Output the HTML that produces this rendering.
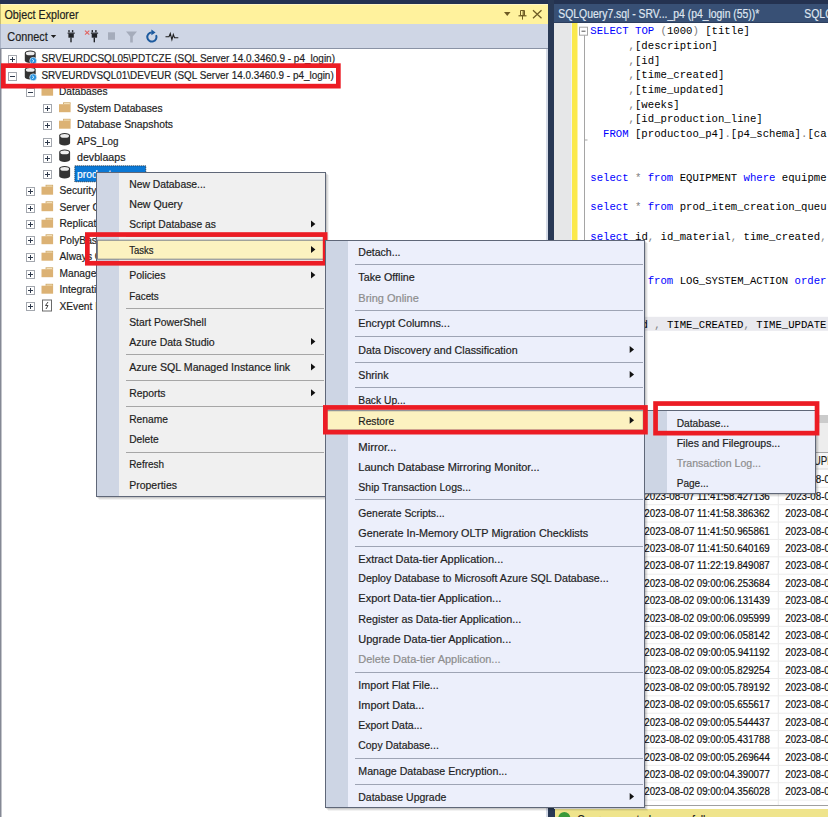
<!DOCTYPE html>
<html><head><meta charset="utf-8"><style>
html,body{margin:0;padding:0;width:828px;height:817px;overflow:hidden;background:#293955}
svg{display:block}
text{white-space:pre}
</style></head><body>
<svg width="828" height="817" viewBox="0 0 828 817">
<rect x="0" y="0" width="828" height="817" fill="#293955" />
<rect x="0" y="0" width="828" height="4" fill="#243250" />
<rect x="0" y="4" width="548" height="20" fill="#fff29d" />
<rect x="0" y="4" width="548" height="1" fill="#fff6c4" />
<rect x="0" y="4" width="1" height="20" fill="#c8bd72" />
<text x="4.5" y="19.1" font-family="Liberation Sans" font-size="12" fill="#1e1e1e" stroke="#1e1e1e" stroke-width="0.2" textLength="74.0" lengthAdjust="spacingAndGlyphs" >Object Explorer</text>
<path d="M504 12 L510.5 12 L507.25 16 Z" fill="#6e5b24" stroke="none" stroke-width="1" />
<path d="M520.5 10.5 h4 v5 h-4 Z" fill="none" stroke="#6e5b24" stroke-width="1" />
<path d="M518.5 15.8 h8" fill="none" stroke="#6e5b24" stroke-width="1.2" />
<path d="M522.5 16 v3.6" fill="none" stroke="#6e5b24" stroke-width="1" />
<rect x="522.6" y="10.5" width="1.2" height="5" fill="#6e5b24" />
<path d="M533 10.3 L541.5 18.3 M541.5 10.3 L533 18.3" fill="none" stroke="#6e5b24" stroke-width="1.25" />
<rect x="0" y="24" width="548" height="24" fill="#cfd6e5" />
<rect x="0" y="24" width="1" height="24" fill="#aab3c6" />
<rect x="0" y="48" width="548" height="1" fill="#8a93a5" />
<text x="7.3" y="40.8" font-family="Liberation Sans" font-size="12" fill="#1e1e1e" stroke="#1e1e1e" stroke-width="0.2" textLength="40.5" lengthAdjust="spacingAndGlyphs" >Connect</text>
<path d="M50.8 35 L56.2 35 L53.5 38 Z" fill="#1e1e1e" stroke="none" stroke-width="1" />
<rect x="68.3" y="30.1" width="1.4" height="2.2" fill="#222428" />
<rect x="71.9" y="30.1" width="1.4" height="2.2" fill="#222428" />
<rect x="67.6" y="32.6" width="7.2" height="1.1" fill="#222428" />
<rect x="68.4" y="33.5" width="5.4" height="4.2" fill="#222428" />
<rect x="70.3" y="37.5" width="1.4" height="4.8" fill="#222428" />
<rect x="91.6" y="30.1" width="1.4" height="2.2" fill="#222428" />
<rect x="95.2" y="30.1" width="1.4" height="2.2" fill="#222428" />
<rect x="90.89999999999999" y="32.6" width="7.2" height="1.1" fill="#222428" />
<rect x="91.7" y="33.5" width="5.4" height="4.2" fill="#222428" />
<rect x="93.6" y="37.5" width="1.4" height="4.8" fill="#222428" />
<path d="M85 30.6 L89.3 34.6 M89.3 30.6 L85 34.6" fill="none" stroke="#e2625f" stroke-width="1.1" />
<rect x="108" y="32.3" width="7" height="7.5" fill="#a5acbb" />
<path d="M126 31.5 h11 l-4.2 5 v6 h-2.6 v-6 Z" fill="#a5acbb" stroke="none" stroke-width="1" />
<path d="M151.74 32.40 A4.6 4.6 0 1 0 156.07 35.06" fill="none" stroke="#1d5a9e" stroke-width="2.0" />
<path d="M151.4 29.6 L155.6 32.4 L151.4 35.2 Z" fill="#1d5a9e" stroke="none" stroke-width="1" />
<path d="M165.5 36.8 h3.5 l1.3 -3.2 l1.6 6 l1.4 -5 l1.2 3.2 h3.8" fill="none" stroke="#1e1e1e" stroke-width="1.1" />
<rect x="1" y="49" width="547" height="768" fill="#ffffff" />
<rect x="546" y="49" width="2" height="768" fill="#d5dbe7" />
<rect x="0" y="49" width="1.5" height="768" fill="#858995" />
<rect x="8.5" y="55.5" width="8" height="8" fill="#ffffff" stroke="#a3a7ae" stroke-width="1"/>
<line x1="10" y1="59.5" x2="15" y2="59.5" stroke="#2f3a4c" stroke-width="1" />
<line x1="12.5" y1="57" x2="12.5" y2="62" stroke="#2f3a4c" stroke-width="1" />
<path d="M24.8 53.0 a5.45 2.5 0 0 1 10.9 0 v7.6 a5.45 2.5 0 0 1 -10.9 0 Z" fill="#333333" stroke="none" stroke-width="1" />
<ellipse cx="30.25" cy="53.4" rx="4.4" ry="1.9" fill="#eeeeee"/>
<circle cx="33.2" cy="60.8" r="3.5" fill="#2b92dc" stroke="#ffffff" stroke-width="0.6"/>
<path d="M32.2 59.3 l1.8 1.5 l-1.8 1.5" fill="none" stroke="#d8f0ff" stroke-width="1" />
<text x="41.5" y="62.0" font-family="Liberation Sans" font-size="11.6" fill="#1e1e1e" stroke="#1e1e1e" stroke-width="0.2" textLength="293.5" lengthAdjust="spacingAndGlyphs" >SRVEURDCSQL05\PDTCZE (SQL Server 14.0.3460.9 - p4_login)</text>
<rect x="8.5" y="72.5" width="8" height="8" fill="#ffffff" stroke="#a3a7ae" stroke-width="1"/>
<line x1="10" y1="76.5" x2="15" y2="76.5" stroke="#2f3a4c" stroke-width="1" />
<path d="M24.8 69.5 a5.45 2.5 0 0 1 10.9 0 v7.6 a5.45 2.5 0 0 1 -10.9 0 Z" fill="#333333" stroke="none" stroke-width="1" />
<ellipse cx="30.25" cy="69.9" rx="4.4" ry="1.9" fill="#eeeeee"/>
<circle cx="33.2" cy="77.3" r="3.5" fill="#2b92dc" stroke="#ffffff" stroke-width="0.6"/>
<path d="M32.2 75.8 l1.8 1.5 l-1.8 1.5" fill="none" stroke="#d8f0ff" stroke-width="1" />
<text x="41.5" y="78.5" font-family="Liberation Sans" font-size="11.6" fill="#1e1e1e" stroke="#1e1e1e" stroke-width="0.2" textLength="292.2" lengthAdjust="spacingAndGlyphs" >SRVEURDVSQL01\DEVEUR (SQL Server 14.0.3460.9 - p4_login)</text>
<rect x="26.5" y="88.5" width="8" height="8" fill="#ffffff" stroke="#a3a7ae" stroke-width="1"/>
<line x1="28" y1="92.5" x2="33" y2="92.5" stroke="#2f3a4c" stroke-width="1" />
<path d="M45.6 85.8 h7.5 v2 h-7.5 Z" fill="#cfa96a" stroke="none" stroke-width="1" />
<rect x="46.5" y="86.60000000000001" width="5.8" height="1.1" fill="#f6e6c0" />
<rect x="41.5" y="87.7" width="11.6" height="8" fill="#dcb274" />
<text x="59" y="95.0" font-family="Liberation Sans" font-size="11.6" fill="#1e1e1e" stroke="#1e1e1e" stroke-width="0.2" textLength="48.5" lengthAdjust="spacingAndGlyphs" >Databases</text>
<rect x="43.5" y="104.5" width="8" height="8" fill="#ffffff" stroke="#a3a7ae" stroke-width="1"/>
<line x1="45" y1="108.5" x2="50" y2="108.5" stroke="#2f3a4c" stroke-width="1" />
<line x1="47.5" y1="106" x2="47.5" y2="111" stroke="#2f3a4c" stroke-width="1" />
<path d="M63.1 102.3 h7.5 v2 h-7.5 Z" fill="#cfa96a" stroke="none" stroke-width="1" />
<rect x="64" y="103.10000000000001" width="5.8" height="1.1" fill="#f6e6c0" />
<rect x="59" y="104.2" width="11.6" height="8" fill="#dcb274" />
<text x="77" y="111.5" font-family="Liberation Sans" font-size="11.6" fill="#1e1e1e" stroke="#1e1e1e" stroke-width="0.2" textLength="85.5" lengthAdjust="spacingAndGlyphs" >System Databases</text>
<rect x="43.5" y="121.5" width="8" height="8" fill="#ffffff" stroke="#a3a7ae" stroke-width="1"/>
<line x1="45" y1="125.5" x2="50" y2="125.5" stroke="#2f3a4c" stroke-width="1" />
<line x1="47.5" y1="123" x2="47.5" y2="128" stroke="#2f3a4c" stroke-width="1" />
<path d="M63.1 118.79999999999998 h7.5 v2 h-7.5 Z" fill="#cfa96a" stroke="none" stroke-width="1" />
<rect x="64" y="119.6" width="5.8" height="1.1" fill="#f6e6c0" />
<rect x="59" y="120.69999999999999" width="11.6" height="8" fill="#dcb274" />
<text x="77" y="128.0" font-family="Liberation Sans" font-size="11.6" fill="#1e1e1e" stroke="#1e1e1e" stroke-width="0.2" textLength="96.0" lengthAdjust="spacingAndGlyphs" >Database Snapshots</text>
<rect x="43.5" y="138.5" width="8" height="8" fill="#ffffff" stroke="#a3a7ae" stroke-width="1"/>
<line x1="45" y1="142.5" x2="50" y2="142.5" stroke="#2f3a4c" stroke-width="1" />
<line x1="47.5" y1="140" x2="47.5" y2="145" stroke="#2f3a4c" stroke-width="1" />
<path d="M59.2 135.5 a5.45 2.5 0 0 1 10.9 0 v7.6 a5.45 2.5 0 0 1 -10.9 0 Z" fill="#333333" stroke="none" stroke-width="1" />
<ellipse cx="64.65" cy="135.9" rx="4.4" ry="1.9" fill="#eeeeee"/>
<text x="77" y="144.5" font-family="Liberation Sans" font-size="11.6" fill="#1e1e1e" stroke="#1e1e1e" stroke-width="0.2" textLength="41.5" lengthAdjust="spacingAndGlyphs" >APS_Log</text>
<rect x="43.5" y="154.5" width="8" height="8" fill="#ffffff" stroke="#a3a7ae" stroke-width="1"/>
<line x1="45" y1="158.5" x2="50" y2="158.5" stroke="#2f3a4c" stroke-width="1" />
<line x1="47.5" y1="156" x2="47.5" y2="161" stroke="#2f3a4c" stroke-width="1" />
<path d="M59.2 152.0 a5.45 2.5 0 0 1 10.9 0 v7.6 a5.45 2.5 0 0 1 -10.9 0 Z" fill="#333333" stroke="none" stroke-width="1" />
<ellipse cx="64.65" cy="152.4" rx="4.4" ry="1.9" fill="#eeeeee"/>
<text x="77" y="161.0" font-family="Liberation Sans" font-size="11.6" fill="#1e1e1e" stroke="#1e1e1e" stroke-width="0.2" textLength="48.5" lengthAdjust="spacingAndGlyphs" >devblaaps</text>
<rect x="43.5" y="170.5" width="8" height="8" fill="#ffffff" stroke="#a3a7ae" stroke-width="1"/>
<line x1="45" y1="174.5" x2="50" y2="174.5" stroke="#2f3a4c" stroke-width="1" />
<line x1="47.5" y1="172" x2="47.5" y2="177" stroke="#2f3a4c" stroke-width="1" />
<path d="M59.2 168.5 a5.45 2.5 0 0 1 10.9 0 v7.6 a5.45 2.5 0 0 1 -10.9 0 Z" fill="#333333" stroke="none" stroke-width="1" />
<ellipse cx="64.65" cy="168.9" rx="4.4" ry="1.9" fill="#eeeeee"/>
<rect x="74.8" y="165.8" width="71" height="16" fill="#0a78d5" />
<rect x="74.8" y="165.8" width="71" height="16" fill="none" stroke="#1a1a1a" stroke-width="0.8" stroke-dasharray="1 1"/>
<text x="77" y="177.5" font-family="Liberation Sans" font-size="11.6" fill="#ffffff" stroke="#ffffff" stroke-width="0.2" textLength="46.0" lengthAdjust="spacingAndGlyphs" >productoo</text>
<rect x="26.5" y="187.5" width="8" height="8" fill="#ffffff" stroke="#a3a7ae" stroke-width="1"/>
<line x1="28" y1="191.5" x2="33" y2="191.5" stroke="#2f3a4c" stroke-width="1" />
<line x1="30.5" y1="189" x2="30.5" y2="194" stroke="#2f3a4c" stroke-width="1" />
<path d="M45.6 184.79999999999998 h7.5 v2 h-7.5 Z" fill="#cfa96a" stroke="none" stroke-width="1" />
<rect x="46.5" y="185.6" width="5.8" height="1.1" fill="#f6e6c0" />
<rect x="41.5" y="186.7" width="11.6" height="8" fill="#dcb274" />
<text x="59.5" y="194.0" font-family="Liberation Sans" font-size="11.6" fill="#1e1e1e" stroke="#1e1e1e" stroke-width="0.2" textLength="36.8" lengthAdjust="spacingAndGlyphs" >Security</text>
<rect x="26.5" y="204.5" width="8" height="8" fill="#ffffff" stroke="#a3a7ae" stroke-width="1"/>
<line x1="28" y1="208.5" x2="33" y2="208.5" stroke="#2f3a4c" stroke-width="1" />
<line x1="30.5" y1="206" x2="30.5" y2="211" stroke="#2f3a4c" stroke-width="1" />
<path d="M45.6 201.29999999999998 h7.5 v2 h-7.5 Z" fill="#cfa96a" stroke="none" stroke-width="1" />
<rect x="46.5" y="202.1" width="5.8" height="1.1" fill="#f6e6c0" />
<rect x="41.5" y="203.2" width="11.6" height="8" fill="#dcb274" />
<text x="59.5" y="210.5" font-family="Liberation Sans" font-size="11.6" fill="#1e1e1e" stroke="#1e1e1e" stroke-width="0.2" textLength="67.5" lengthAdjust="spacingAndGlyphs" >Server Objects</text>
<rect x="26.5" y="220.5" width="8" height="8" fill="#ffffff" stroke="#a3a7ae" stroke-width="1"/>
<line x1="28" y1="224.5" x2="33" y2="224.5" stroke="#2f3a4c" stroke-width="1" />
<line x1="30.5" y1="222" x2="30.5" y2="227" stroke="#2f3a4c" stroke-width="1" />
<path d="M45.6 217.79999999999998 h7.5 v2 h-7.5 Z" fill="#cfa96a" stroke="none" stroke-width="1" />
<rect x="46.5" y="218.6" width="5.8" height="1.1" fill="#f6e6c0" />
<rect x="41.5" y="219.7" width="11.6" height="8" fill="#dcb274" />
<text x="59.5" y="227.0" font-family="Liberation Sans" font-size="11.6" fill="#1e1e1e" stroke="#1e1e1e" stroke-width="0.2" textLength="50.5" lengthAdjust="spacingAndGlyphs" >Replication</text>
<rect x="26.5" y="236.5" width="8" height="8" fill="#ffffff" stroke="#a3a7ae" stroke-width="1"/>
<line x1="28" y1="240.5" x2="33" y2="240.5" stroke="#2f3a4c" stroke-width="1" />
<line x1="30.5" y1="238" x2="30.5" y2="243" stroke="#2f3a4c" stroke-width="1" />
<path d="M45.6 234.29999999999998 h7.5 v2 h-7.5 Z" fill="#cfa96a" stroke="none" stroke-width="1" />
<rect x="46.5" y="235.1" width="5.8" height="1.1" fill="#f6e6c0" />
<rect x="41.5" y="236.2" width="11.6" height="8" fill="#dcb274" />
<text x="59.5" y="243.5" font-family="Liberation Sans" font-size="11.6" fill="#1e1e1e" stroke="#1e1e1e" stroke-width="0.2" textLength="43.1" lengthAdjust="spacingAndGlyphs" >PolyBase</text>
<rect x="26.5" y="253.5" width="8" height="8" fill="#ffffff" stroke="#a3a7ae" stroke-width="1"/>
<line x1="28" y1="257.5" x2="33" y2="257.5" stroke="#2f3a4c" stroke-width="1" />
<line x1="30.5" y1="255" x2="30.5" y2="260" stroke="#2f3a4c" stroke-width="1" />
<path d="M45.6 250.79999999999998 h7.5 v2 h-7.5 Z" fill="#cfa96a" stroke="none" stroke-width="1" />
<rect x="46.5" y="251.6" width="5.8" height="1.1" fill="#f6e6c0" />
<rect x="41.5" y="252.7" width="11.6" height="8" fill="#dcb274" />
<text x="59.5" y="260.0" font-family="Liberation Sans" font-size="11.6" fill="#1e1e1e" stroke="#1e1e1e" stroke-width="0.2" textLength="123.6" lengthAdjust="spacingAndGlyphs" >Always On High Availability</text>
<rect x="26.5" y="270.5" width="8" height="8" fill="#ffffff" stroke="#a3a7ae" stroke-width="1"/>
<line x1="28" y1="274.5" x2="33" y2="274.5" stroke="#2f3a4c" stroke-width="1" />
<line x1="30.5" y1="272" x2="30.5" y2="277" stroke="#2f3a4c" stroke-width="1" />
<path d="M45.6 267.3 h7.5 v2 h-7.5 Z" fill="#cfa96a" stroke="none" stroke-width="1" />
<rect x="46.5" y="268.09999999999997" width="5.8" height="1.1" fill="#f6e6c0" />
<rect x="41.5" y="269.2" width="11.6" height="8" fill="#dcb274" />
<text x="59.5" y="276.5" font-family="Liberation Sans" font-size="11.6" fill="#1e1e1e" stroke="#1e1e1e" stroke-width="0.2" textLength="59.5" lengthAdjust="spacingAndGlyphs" >Management</text>
<rect x="26.5" y="286.5" width="8" height="8" fill="#ffffff" stroke="#a3a7ae" stroke-width="1"/>
<line x1="28" y1="290.5" x2="33" y2="290.5" stroke="#2f3a4c" stroke-width="1" />
<line x1="30.5" y1="288" x2="30.5" y2="293" stroke="#2f3a4c" stroke-width="1" />
<path d="M45.6 283.8 h7.5 v2 h-7.5 Z" fill="#cfa96a" stroke="none" stroke-width="1" />
<rect x="46.5" y="284.59999999999997" width="5.8" height="1.1" fill="#f6e6c0" />
<rect x="41.5" y="285.7" width="11.6" height="8" fill="#dcb274" />
<text x="59.5" y="293.0" font-family="Liberation Sans" font-size="11.6" fill="#1e1e1e" stroke="#1e1e1e" stroke-width="0.2" textLength="133.2" lengthAdjust="spacingAndGlyphs" >Integration Services Catalogs</text>
<rect x="26.5" y="302.5" width="8" height="8" fill="#ffffff" stroke="#a3a7ae" stroke-width="1"/>
<line x1="28" y1="306.5" x2="33" y2="306.5" stroke="#2f3a4c" stroke-width="1" />
<line x1="30.5" y1="304" x2="30.5" y2="309" stroke="#2f3a4c" stroke-width="1" />
<rect x="42.5" y="300.0" width="9" height="11" fill="#ffffff" stroke="#6a6a6a" stroke-width="1"/>
<path d="M48 302.0 l-2.5 3.5 h2.5 l-2 3.5" fill="none" stroke="#333" stroke-width="0.9" />
<text x="59.5" y="309.5" font-family="Liberation Sans" font-size="11.6" fill="#1e1e1e" stroke="#1e1e1e" stroke-width="0.2" textLength="68.0" lengthAdjust="spacingAndGlyphs" >XEvent Profiler</text>
<rect x="554" y="4" width="274" height="18.5" fill="#385075" />
<text x="558.3" y="17.5" font-family="Liberation Sans" font-size="12" fill="#dfe5f0" stroke="#dfe5f0" stroke-width="0.2" textLength="201.0" lengthAdjust="spacingAndGlyphs" >SQLQuery7.sql - SRV..._p4 (p4_login (55))*</text>
<text x="804.3" y="17.5" font-family="Liberation Sans" font-size="12" fill="#dfe5f0" stroke="#dfe5f0" stroke-width="0.2" textLength="49.3" lengthAdjust="spacingAndGlyphs" >SQLQuery</text>
<rect x="554" y="22.3" width="274" height="0.8" fill="#2c3d5c" />
<rect x="554" y="23" width="274" height="392" fill="#ffffff" />
<rect x="554" y="23" width="17.5" height="392" fill="#e6e7e8" />
<rect x="572" y="23" width="5.5" height="392" fill="#fbe94c" />
<rect x="579.5" y="27.2" width="8" height="8" fill="#ffffff" stroke="#a5a5a5" stroke-width="1"/>
<line x1="581.5" y1="31.2" x2="585.5" y2="31.2" stroke="#555" stroke-width="1" />
<line x1="584.5" y1="35.2" x2="584.5" y2="415" stroke="#a5a5a5" stroke-width="1" />
<line x1="584.5" y1="140" x2="587.5" y2="140" stroke="#a5a5a5" stroke-width="1" />
<rect x="586" y="316.8" width="242" height="14" fill="#e9e9ee" />
<text x="590.3" y="34.4" font-family="Liberation Mono" font-size="10.7" fill="#0000ff"  textLength="38.3" lengthAdjust="spacingAndGlyphs" xml:space="preserve">SELECT</text>
<text x="634.995" y="34.4" font-family="Liberation Mono" font-size="10.7" fill="#0000ff"  textLength="19.2" lengthAdjust="spacingAndGlyphs" xml:space="preserve">TOP</text>
<text x="660.535" y="34.4" font-family="Liberation Mono" font-size="10.7" fill="#808080"  textLength="6.4" lengthAdjust="spacingAndGlyphs" xml:space="preserve">(</text>
<text x="666.92" y="34.4" font-family="Liberation Mono" font-size="10.7" fill="#000000"  textLength="25.5" lengthAdjust="spacingAndGlyphs" xml:space="preserve">1000</text>
<text x="692.4599999999999" y="34.4" font-family="Liberation Mono" font-size="10.7" fill="#808080"  textLength="6.4" lengthAdjust="spacingAndGlyphs" xml:space="preserve">)</text>
<text x="705.2299999999999" y="34.4" font-family="Liberation Mono" font-size="10.7" fill="#000000"  textLength="44.7" lengthAdjust="spacingAndGlyphs" xml:space="preserve">[title]</text>
<text x="628.6099999999999" y="49.07" font-family="Liberation Mono" font-size="10.7" fill="#808080"  textLength="6.4" lengthAdjust="spacingAndGlyphs" xml:space="preserve">,</text>
<text x="634.995" y="49.07" font-family="Liberation Mono" font-size="10.7" fill="#000000"  textLength="83.0" lengthAdjust="spacingAndGlyphs" xml:space="preserve">[description]</text>
<text x="628.6099999999999" y="63.739999999999995" font-family="Liberation Mono" font-size="10.7" fill="#808080"  textLength="6.4" lengthAdjust="spacingAndGlyphs" xml:space="preserve">,</text>
<text x="634.995" y="63.739999999999995" font-family="Liberation Mono" font-size="10.7" fill="#000000"  textLength="25.5" lengthAdjust="spacingAndGlyphs" xml:space="preserve">[id]</text>
<text x="628.6099999999999" y="78.41" font-family="Liberation Mono" font-size="10.7" fill="#808080"  textLength="6.4" lengthAdjust="spacingAndGlyphs" xml:space="preserve">,</text>
<text x="634.995" y="78.41" font-family="Liberation Mono" font-size="10.7" fill="#000000"  textLength="89.4" lengthAdjust="spacingAndGlyphs" xml:space="preserve">[time_created]</text>
<text x="628.6099999999999" y="93.08" font-family="Liberation Mono" font-size="10.7" fill="#808080"  textLength="6.4" lengthAdjust="spacingAndGlyphs" xml:space="preserve">,</text>
<text x="634.995" y="93.08" font-family="Liberation Mono" font-size="10.7" fill="#000000"  textLength="89.4" lengthAdjust="spacingAndGlyphs" xml:space="preserve">[time_updated]</text>
<text x="628.6099999999999" y="107.75" font-family="Liberation Mono" font-size="10.7" fill="#808080"  textLength="6.4" lengthAdjust="spacingAndGlyphs" xml:space="preserve">,</text>
<text x="634.995" y="107.75" font-family="Liberation Mono" font-size="10.7" fill="#000000"  textLength="44.7" lengthAdjust="spacingAndGlyphs" xml:space="preserve">[weeks]</text>
<text x="628.6099999999999" y="122.41999999999999" font-family="Liberation Mono" font-size="10.7" fill="#808080"  textLength="6.4" lengthAdjust="spacingAndGlyphs" xml:space="preserve">,</text>
<text x="634.995" y="122.41999999999999" font-family="Liberation Mono" font-size="10.7" fill="#000000"  textLength="127.7" lengthAdjust="spacingAndGlyphs" xml:space="preserve">[id_production_line]</text>
<text x="603.0699999999999" y="137.09" font-family="Liberation Mono" font-size="10.7" fill="#0000ff"  textLength="25.5" lengthAdjust="spacingAndGlyphs" xml:space="preserve">FROM</text>
<text x="634.995" y="137.09" font-family="Liberation Mono" font-size="10.7" fill="#000000"  textLength="89.4" lengthAdjust="spacingAndGlyphs" xml:space="preserve">[productoo_p4]</text>
<text x="724.385" y="137.09" font-family="Liberation Mono" font-size="10.7" fill="#808080"  textLength="6.4" lengthAdjust="spacingAndGlyphs" xml:space="preserve">.</text>
<text x="730.77" y="137.09" font-family="Liberation Mono" font-size="10.7" fill="#000000"  textLength="70.2" lengthAdjust="spacingAndGlyphs" xml:space="preserve">[p4_schema]</text>
<text x="801.0049999999999" y="137.09" font-family="Liberation Mono" font-size="10.7" fill="#808080"  textLength="6.4" lengthAdjust="spacingAndGlyphs" xml:space="preserve">.</text>
<text x="807.39" y="137.09" font-family="Liberation Mono" font-size="10.7" fill="#000000"  textLength="19.2" lengthAdjust="spacingAndGlyphs" xml:space="preserve">[ca</text>
<text x="590.3" y="181.1" font-family="Liberation Mono" font-size="10.7" fill="#0000ff"  textLength="38.3" lengthAdjust="spacingAndGlyphs" xml:space="preserve">select</text>
<text x="634.995" y="181.1" font-family="Liberation Mono" font-size="10.7" fill="#808080"  textLength="6.4" lengthAdjust="spacingAndGlyphs" xml:space="preserve">*</text>
<text x="647.765" y="181.1" font-family="Liberation Mono" font-size="10.7" fill="#0000ff"  textLength="25.5" lengthAdjust="spacingAndGlyphs" xml:space="preserve">from</text>
<text x="679.6899999999999" y="181.1" font-family="Liberation Mono" font-size="10.7" fill="#000000"  textLength="57.5" lengthAdjust="spacingAndGlyphs" xml:space="preserve">EQUIPMENT</text>
<text x="743.54" y="181.1" font-family="Liberation Mono" font-size="10.7" fill="#0000ff"  textLength="31.9" lengthAdjust="spacingAndGlyphs" xml:space="preserve">where</text>
<text x="781.8499999999999" y="181.1" font-family="Liberation Mono" font-size="10.7" fill="#000000"  textLength="44.7" lengthAdjust="spacingAndGlyphs" xml:space="preserve">equipme</text>
<text x="590.3" y="210.44" font-family="Liberation Mono" font-size="10.7" fill="#0000ff"  textLength="38.3" lengthAdjust="spacingAndGlyphs" xml:space="preserve">select</text>
<text x="634.995" y="210.44" font-family="Liberation Mono" font-size="10.7" fill="#808080"  textLength="6.4" lengthAdjust="spacingAndGlyphs" xml:space="preserve">*</text>
<text x="647.765" y="210.44" font-family="Liberation Mono" font-size="10.7" fill="#0000ff"  textLength="25.5" lengthAdjust="spacingAndGlyphs" xml:space="preserve">from</text>
<text x="679.6899999999999" y="210.44" font-family="Liberation Mono" font-size="10.7" fill="#000000"  textLength="146.9" lengthAdjust="spacingAndGlyphs" xml:space="preserve">prod_item_creation_queu</text>
<text x="590.3" y="239.78" font-family="Liberation Mono" font-size="10.7" fill="#0000ff"  textLength="38.3" lengthAdjust="spacingAndGlyphs" xml:space="preserve">select</text>
<text x="634.995" y="239.78" font-family="Liberation Mono" font-size="10.7" fill="#000000"  textLength="12.8" lengthAdjust="spacingAndGlyphs" xml:space="preserve">id</text>
<text x="647.765" y="239.78" font-family="Liberation Mono" font-size="10.7" fill="#808080"  textLength="6.4" lengthAdjust="spacingAndGlyphs" xml:space="preserve">,</text>
<text x="660.535" y="239.78" font-family="Liberation Mono" font-size="10.7" fill="#000000"  textLength="70.2" lengthAdjust="spacingAndGlyphs" xml:space="preserve">id_material</text>
<text x="730.77" y="239.78" font-family="Liberation Mono" font-size="10.7" fill="#808080"  textLength="6.4" lengthAdjust="spacingAndGlyphs" xml:space="preserve">,</text>
<text x="743.54" y="239.78" font-family="Liberation Mono" font-size="10.7" fill="#000000"  textLength="76.6" lengthAdjust="spacingAndGlyphs" xml:space="preserve">time_created</text>
<text x="820.16" y="239.78" font-family="Liberation Mono" font-size="10.7" fill="#808080"  textLength="6.4" lengthAdjust="spacingAndGlyphs" xml:space="preserve">,</text>
<text x="590.3" y="283.78999999999996" font-family="Liberation Mono" font-size="10.7" fill="#0000ff"  textLength="38.3" lengthAdjust="spacingAndGlyphs" xml:space="preserve">select</text>
<text x="634.995" y="283.78999999999996" font-family="Liberation Mono" font-size="10.7" fill="#808080"  textLength="6.4" lengthAdjust="spacingAndGlyphs" xml:space="preserve">*</text>
<text x="647.765" y="283.78999999999996" font-family="Liberation Mono" font-size="10.7" fill="#0000ff"  textLength="25.5" lengthAdjust="spacingAndGlyphs" xml:space="preserve">from</text>
<text x="679.6899999999999" y="283.78999999999996" font-family="Liberation Mono" font-size="10.7" fill="#000000"  textLength="108.5" lengthAdjust="spacingAndGlyphs" xml:space="preserve">LOG_SYSTEM_ACTION</text>
<text x="794.6199999999999" y="283.78999999999996" font-family="Liberation Mono" font-size="10.7" fill="#0000ff"  textLength="31.9" lengthAdjust="spacingAndGlyphs" xml:space="preserve">order</text>
<text x="590.3" y="327.79999999999995" font-family="Liberation Mono" font-size="10.7" fill="#0000ff"  textLength="38.3" lengthAdjust="spacingAndGlyphs" xml:space="preserve">select</text>
<text x="634.995" y="327.79999999999995" font-family="Liberation Mono" font-size="10.7" fill="#000000"  textLength="12.8" lengthAdjust="spacingAndGlyphs" xml:space="preserve">id</text>
<text x="654.15" y="327.79999999999995" font-family="Liberation Mono" font-size="10.7" fill="#808080"  textLength="6.4" lengthAdjust="spacingAndGlyphs" xml:space="preserve">,</text>
<text x="666.92" y="327.79999999999995" font-family="Liberation Mono" font-size="10.7" fill="#000000"  textLength="76.6" lengthAdjust="spacingAndGlyphs" xml:space="preserve">TIME_CREATED</text>
<text x="743.54" y="327.79999999999995" font-family="Liberation Mono" font-size="10.7" fill="#808080"  textLength="6.4" lengthAdjust="spacingAndGlyphs" xml:space="preserve">,</text>
<text x="756.31" y="327.79999999999995" font-family="Liberation Mono" font-size="10.7" fill="#000000"  textLength="70.2" lengthAdjust="spacingAndGlyphs" xml:space="preserve">TIME_UPDATE</text>
<rect x="554" y="415" width="274" height="8" fill="#cbcbcb" />
<rect x="554" y="423" width="274" height="29" fill="#ededed" />
<rect x="554" y="452" width="274" height="1" fill="#a8a8a8" />
<rect x="554" y="453" width="274" height="352" fill="#ffffff" />
<rect x="554" y="453" width="274" height="16" fill="#f7f7f7" />
<line x1="554" y1="469" x2="828" y2="469" stroke="#d8d8d8" stroke-width="1" />
<text x="785.3" y="465.2" font-family="Liberation Sans" font-size="12" fill="#1e1e1e" stroke="#1e1e1e" stroke-width="0.2" textLength="74.1" lengthAdjust="spacingAndGlyphs" >TIME_UPDATED</text>
<text x="640" y="465.2" font-family="Liberation Sans" font-size="12" fill="#1e1e1e" stroke="#1e1e1e" stroke-width="0.2" textLength="74.1" lengthAdjust="spacingAndGlyphs" >TIME_CREATED</text>
<line x1="778.3" y1="453" x2="778.3" y2="805" stroke="#ececec" stroke-width="1" />
<text x="644.3" y="482.5" font-family="Liberation Sans" font-size="11" fill="#111111" stroke="#111111" stroke-width="0.2" textLength="125.5" lengthAdjust="spacingAndGlyphs" >2023-08-07 11:41:58.491226</text>
<text x="785.3" y="482.5" font-family="Liberation Sans" font-size="11" fill="#111111" stroke="#111111" stroke-width="0.2" textLength="125.5" lengthAdjust="spacingAndGlyphs" >2023-08-07 11:41:58.491226</text>
<line x1="554" y1="487.3" x2="828" y2="487.3" stroke="#ededed" stroke-width="1" />
<text x="644.3" y="499.88" font-family="Liberation Sans" font-size="11" fill="#111111" stroke="#111111" stroke-width="0.2" textLength="125.5" lengthAdjust="spacingAndGlyphs" >2023-08-07 11:41:58.427136</text>
<text x="785.3" y="499.88" font-family="Liberation Sans" font-size="11" fill="#111111" stroke="#111111" stroke-width="0.2" textLength="125.5" lengthAdjust="spacingAndGlyphs" >2023-08-07 11:41:58.427136</text>
<line x1="554" y1="504.68" x2="828" y2="504.68" stroke="#ededed" stroke-width="1" />
<text x="644.3" y="517.26" font-family="Liberation Sans" font-size="11" fill="#111111" stroke="#111111" stroke-width="0.2" textLength="125.5" lengthAdjust="spacingAndGlyphs" >2023-08-07 11:41:58.386362</text>
<text x="785.3" y="517.26" font-family="Liberation Sans" font-size="11" fill="#111111" stroke="#111111" stroke-width="0.2" textLength="125.5" lengthAdjust="spacingAndGlyphs" >2023-08-07 11:41:58.386362</text>
<line x1="554" y1="522.06" x2="828" y2="522.06" stroke="#ededed" stroke-width="1" />
<text x="644.3" y="534.64" font-family="Liberation Sans" font-size="11" fill="#111111" stroke="#111111" stroke-width="0.2" textLength="125.5" lengthAdjust="spacingAndGlyphs" >2023-08-07 11:41:50.965861</text>
<text x="785.3" y="534.64" font-family="Liberation Sans" font-size="11" fill="#111111" stroke="#111111" stroke-width="0.2" textLength="125.5" lengthAdjust="spacingAndGlyphs" >2023-08-07 11:41:50.965861</text>
<line x1="554" y1="539.4399999999999" x2="828" y2="539.4399999999999" stroke="#ededed" stroke-width="1" />
<text x="644.3" y="552.02" font-family="Liberation Sans" font-size="11" fill="#111111" stroke="#111111" stroke-width="0.2" textLength="125.5" lengthAdjust="spacingAndGlyphs" >2023-08-07 11:41:50.640169</text>
<text x="785.3" y="552.02" font-family="Liberation Sans" font-size="11" fill="#111111" stroke="#111111" stroke-width="0.2" textLength="125.5" lengthAdjust="spacingAndGlyphs" >2023-08-07 11:41:50.640169</text>
<line x1="554" y1="556.8199999999999" x2="828" y2="556.8199999999999" stroke="#ededed" stroke-width="1" />
<text x="644.3" y="569.4" font-family="Liberation Sans" font-size="11" fill="#111111" stroke="#111111" stroke-width="0.2" textLength="125.5" lengthAdjust="spacingAndGlyphs" >2023-08-07 11:22:19.849087</text>
<text x="785.3" y="569.4" font-family="Liberation Sans" font-size="11" fill="#111111" stroke="#111111" stroke-width="0.2" textLength="125.5" lengthAdjust="spacingAndGlyphs" >2023-08-07 11:22:19.849087</text>
<line x1="554" y1="574.1999999999999" x2="828" y2="574.1999999999999" stroke="#ededed" stroke-width="1" />
<text x="644.3" y="586.78" font-family="Liberation Sans" font-size="11" fill="#111111" stroke="#111111" stroke-width="0.2" textLength="125.5" lengthAdjust="spacingAndGlyphs" >2023-08-02 09:00:06.253684</text>
<text x="785.3" y="586.78" font-family="Liberation Sans" font-size="11" fill="#111111" stroke="#111111" stroke-width="0.2" textLength="125.5" lengthAdjust="spacingAndGlyphs" >2023-08-02 09:00:06.253684</text>
<line x1="554" y1="591.5799999999999" x2="828" y2="591.5799999999999" stroke="#ededed" stroke-width="1" />
<text x="644.3" y="604.16" font-family="Liberation Sans" font-size="11" fill="#111111" stroke="#111111" stroke-width="0.2" textLength="125.5" lengthAdjust="spacingAndGlyphs" >2023-08-02 09:00:06.131439</text>
<text x="785.3" y="604.16" font-family="Liberation Sans" font-size="11" fill="#111111" stroke="#111111" stroke-width="0.2" textLength="125.5" lengthAdjust="spacingAndGlyphs" >2023-08-02 09:00:06.131439</text>
<line x1="554" y1="608.9599999999999" x2="828" y2="608.9599999999999" stroke="#ededed" stroke-width="1" />
<text x="644.3" y="621.54" font-family="Liberation Sans" font-size="11" fill="#111111" stroke="#111111" stroke-width="0.2" textLength="125.5" lengthAdjust="spacingAndGlyphs" >2023-08-02 09:00:06.095999</text>
<text x="785.3" y="621.54" font-family="Liberation Sans" font-size="11" fill="#111111" stroke="#111111" stroke-width="0.2" textLength="125.5" lengthAdjust="spacingAndGlyphs" >2023-08-02 09:00:06.095999</text>
<line x1="554" y1="626.3399999999999" x2="828" y2="626.3399999999999" stroke="#ededed" stroke-width="1" />
<text x="644.3" y="638.92" font-family="Liberation Sans" font-size="11" fill="#111111" stroke="#111111" stroke-width="0.2" textLength="125.5" lengthAdjust="spacingAndGlyphs" >2023-08-02 09:00:06.058142</text>
<text x="785.3" y="638.92" font-family="Liberation Sans" font-size="11" fill="#111111" stroke="#111111" stroke-width="0.2" textLength="125.5" lengthAdjust="spacingAndGlyphs" >2023-08-02 09:00:06.058142</text>
<line x1="554" y1="643.7199999999999" x2="828" y2="643.7199999999999" stroke="#ededed" stroke-width="1" />
<text x="644.3" y="656.3" font-family="Liberation Sans" font-size="11" fill="#111111" stroke="#111111" stroke-width="0.2" textLength="125.5" lengthAdjust="spacingAndGlyphs" >2023-08-02 09:00:05.941192</text>
<text x="785.3" y="656.3" font-family="Liberation Sans" font-size="11" fill="#111111" stroke="#111111" stroke-width="0.2" textLength="125.5" lengthAdjust="spacingAndGlyphs" >2023-08-02 09:00:05.941192</text>
<line x1="554" y1="661.0999999999999" x2="828" y2="661.0999999999999" stroke="#ededed" stroke-width="1" />
<text x="644.3" y="673.68" font-family="Liberation Sans" font-size="11" fill="#111111" stroke="#111111" stroke-width="0.2" textLength="125.5" lengthAdjust="spacingAndGlyphs" >2023-08-02 09:00:05.829254</text>
<text x="785.3" y="673.68" font-family="Liberation Sans" font-size="11" fill="#111111" stroke="#111111" stroke-width="0.2" textLength="125.5" lengthAdjust="spacingAndGlyphs" >2023-08-02 09:00:05.829254</text>
<line x1="554" y1="678.4799999999999" x2="828" y2="678.4799999999999" stroke="#ededed" stroke-width="1" />
<text x="644.3" y="691.06" font-family="Liberation Sans" font-size="11" fill="#111111" stroke="#111111" stroke-width="0.2" textLength="125.5" lengthAdjust="spacingAndGlyphs" >2023-08-02 09:00:05.789192</text>
<text x="785.3" y="691.06" font-family="Liberation Sans" font-size="11" fill="#111111" stroke="#111111" stroke-width="0.2" textLength="125.5" lengthAdjust="spacingAndGlyphs" >2023-08-02 09:00:05.789192</text>
<line x1="554" y1="695.8599999999999" x2="828" y2="695.8599999999999" stroke="#ededed" stroke-width="1" />
<text x="644.3" y="708.44" font-family="Liberation Sans" font-size="11" fill="#111111" stroke="#111111" stroke-width="0.2" textLength="125.5" lengthAdjust="spacingAndGlyphs" >2023-08-02 09:00:05.655617</text>
<text x="785.3" y="708.44" font-family="Liberation Sans" font-size="11" fill="#111111" stroke="#111111" stroke-width="0.2" textLength="125.5" lengthAdjust="spacingAndGlyphs" >2023-08-02 09:00:05.655617</text>
<line x1="554" y1="713.24" x2="828" y2="713.24" stroke="#ededed" stroke-width="1" />
<text x="644.3" y="725.8199999999999" font-family="Liberation Sans" font-size="11" fill="#111111" stroke="#111111" stroke-width="0.2" textLength="125.5" lengthAdjust="spacingAndGlyphs" >2023-08-02 09:00:05.544437</text>
<text x="785.3" y="725.8199999999999" font-family="Liberation Sans" font-size="11" fill="#111111" stroke="#111111" stroke-width="0.2" textLength="125.5" lengthAdjust="spacingAndGlyphs" >2023-08-02 09:00:05.544437</text>
<line x1="554" y1="730.6199999999999" x2="828" y2="730.6199999999999" stroke="#ededed" stroke-width="1" />
<text x="644.3" y="743.2" font-family="Liberation Sans" font-size="11" fill="#111111" stroke="#111111" stroke-width="0.2" textLength="125.5" lengthAdjust="spacingAndGlyphs" >2023-08-02 09:00:05.431788</text>
<text x="785.3" y="743.2" font-family="Liberation Sans" font-size="11" fill="#111111" stroke="#111111" stroke-width="0.2" textLength="125.5" lengthAdjust="spacingAndGlyphs" >2023-08-02 09:00:05.431788</text>
<line x1="554" y1="748.0" x2="828" y2="748.0" stroke="#ededed" stroke-width="1" />
<text x="644.3" y="760.5799999999999" font-family="Liberation Sans" font-size="11" fill="#111111" stroke="#111111" stroke-width="0.2" textLength="125.5" lengthAdjust="spacingAndGlyphs" >2023-08-02 09:00:05.269644</text>
<text x="785.3" y="760.5799999999999" font-family="Liberation Sans" font-size="11" fill="#111111" stroke="#111111" stroke-width="0.2" textLength="125.5" lengthAdjust="spacingAndGlyphs" >2023-08-02 09:00:05.269644</text>
<line x1="554" y1="765.3799999999999" x2="828" y2="765.3799999999999" stroke="#ededed" stroke-width="1" />
<text x="644.3" y="777.96" font-family="Liberation Sans" font-size="11" fill="#111111" stroke="#111111" stroke-width="0.2" textLength="125.5" lengthAdjust="spacingAndGlyphs" >2023-08-02 09:00:04.390077</text>
<text x="785.3" y="777.96" font-family="Liberation Sans" font-size="11" fill="#111111" stroke="#111111" stroke-width="0.2" textLength="125.5" lengthAdjust="spacingAndGlyphs" >2023-08-02 09:00:04.390077</text>
<line x1="554" y1="782.76" x2="828" y2="782.76" stroke="#ededed" stroke-width="1" />
<text x="644.3" y="795.3399999999999" font-family="Liberation Sans" font-size="11" fill="#111111" stroke="#111111" stroke-width="0.2" textLength="125.5" lengthAdjust="spacingAndGlyphs" >2023-08-02 09:00:04.356028</text>
<text x="785.3" y="795.3399999999999" font-family="Liberation Sans" font-size="11" fill="#111111" stroke="#111111" stroke-width="0.2" textLength="125.5" lengthAdjust="spacingAndGlyphs" >2023-08-02 09:00:04.356028</text>
<line x1="554" y1="800.1399999999999" x2="828" y2="800.1399999999999" stroke="#ededed" stroke-width="1" />
<rect x="554" y="805" width="274" height="1" fill="#a0a0a0" />
<rect x="554" y="806" width="274" height="3" fill="#ffffff" />
<rect x="555" y="809" width="273" height="8" fill="#efe48c" />
<circle cx="564.3" cy="818" r="6" fill="#3a9a3a"/>
<text x="577" y="824" font-family="Liberation Sans" font-size="12" fill="#1e1e1e" stroke="#1e1e1e" stroke-width="0.2" textLength="135.8" lengthAdjust="spacingAndGlyphs" >Query executed successfully.</text>
<rect x="548" y="0" width="6" height="817" fill="#293955" />
<rect x="3.35" y="65.64999999999999" width="335.0" height="20.500000000000004" fill="none" stroke="#ec1c24" stroke-width="4.7"/>
<rect x="99" y="175" width="230" height="325" fill="rgba(0,0,0,0.05)" />
<rect x="98" y="174" width="230" height="325" fill="rgba(0,0,0,0.08)" />
<rect x="97" y="173" width="230" height="325" fill="rgba(0,0,0,0.10)" />
<rect x="96" y="172" width="230" height="325" fill="#f0f0f0" />
<rect x="97" y="173" width="22" height="323" fill="#cfd6e4" />
<rect x="96.5" y="172.5" width="229" height="324" fill="none" stroke="#5f6778" stroke-width="1"/>
<text x="129.2" y="187.89999999999998" font-family="Liberation Sans" font-size="11.3" fill="#1e1e1e" stroke="#1e1e1e" stroke-width="0.2" textLength="76.5" lengthAdjust="spacingAndGlyphs" >New Database...</text>
<text x="129.2" y="207.79999999999998" font-family="Liberation Sans" font-size="11.3" fill="#1e1e1e" stroke="#1e1e1e" stroke-width="0.2" textLength="53.3" lengthAdjust="spacingAndGlyphs" >New Query</text>
<text x="129.2" y="228.1" font-family="Liberation Sans" font-size="11.3" fill="#1e1e1e" stroke="#1e1e1e" stroke-width="0.2" textLength="86.7" lengthAdjust="spacingAndGlyphs" >Script Database as</text>
<path d="M311 220.4 L315.4 223.9 L311 227.4 Z" fill="#111111" stroke="none" stroke-width="1" />
<line x1="126" y1="236.5" x2="324" y2="236.5" stroke="#a6a6a6" stroke-width="1" />
<rect x="97.5" y="240.2" width="227" height="19" fill="#fcf2c0" stroke="#7d8088" stroke-width="1"/>
<text x="129.2" y="253.7" font-family="Liberation Sans" font-size="11.3" fill="#1e1e1e" stroke="#1e1e1e" stroke-width="0.2" textLength="24.3" lengthAdjust="spacingAndGlyphs" >Tasks</text>
<path d="M311 246.0 L315.4 249.5 L311 253.0 Z" fill="#111111" stroke="none" stroke-width="1" />
<line x1="126" y1="262.5" x2="324" y2="262.5" stroke="#a6a6a6" stroke-width="1" />
<text x="129.2" y="279.2" font-family="Liberation Sans" font-size="11.3" fill="#1e1e1e" stroke="#1e1e1e" stroke-width="0.2" textLength="36.3" lengthAdjust="spacingAndGlyphs" >Policies</text>
<path d="M311 271.5 L315.4 275 L311 278.5 Z" fill="#111111" stroke="none" stroke-width="1" />
<text x="129.2" y="299.59999999999997" font-family="Liberation Sans" font-size="11.3" fill="#1e1e1e" stroke="#1e1e1e" stroke-width="0.2" textLength="29.6" lengthAdjust="spacingAndGlyphs" >Facets</text>
<line x1="126" y1="308.5" x2="324" y2="308.5" stroke="#a6a6a6" stroke-width="1" />
<text x="129.2" y="325.59999999999997" font-family="Liberation Sans" font-size="11.3" fill="#1e1e1e" stroke="#1e1e1e" stroke-width="0.2" textLength="77.0" lengthAdjust="spacingAndGlyphs" >Start PowerShell</text>
<text x="129.2" y="345.7" font-family="Liberation Sans" font-size="11.3" fill="#1e1e1e" stroke="#1e1e1e" stroke-width="0.2" textLength="85.5" lengthAdjust="spacingAndGlyphs" >Azure Data Studio</text>
<path d="M311 338.0 L315.4 341.5 L311 345.0 Z" fill="#111111" stroke="none" stroke-width="1" />
<line x1="126" y1="354.5" x2="324" y2="354.5" stroke="#a6a6a6" stroke-width="1" />
<text x="129.2" y="371.3" font-family="Liberation Sans" font-size="11.3" fill="#1e1e1e" stroke="#1e1e1e" stroke-width="0.2" textLength="161.0" lengthAdjust="spacingAndGlyphs" >Azure SQL Managed Instance link</text>
<path d="M311 363.6 L315.4 367.1 L311 370.6 Z" fill="#111111" stroke="none" stroke-width="1" />
<line x1="126" y1="380.5" x2="324" y2="380.5" stroke="#a6a6a6" stroke-width="1" />
<text x="129.2" y="397.0" font-family="Liberation Sans" font-size="11.3" fill="#1e1e1e" stroke="#1e1e1e" stroke-width="0.2" textLength="36.3" lengthAdjust="spacingAndGlyphs" >Reports</text>
<path d="M311 389.3 L315.4 392.8 L311 396.3 Z" fill="#111111" stroke="none" stroke-width="1" />
<line x1="126" y1="406.5" x2="324" y2="406.5" stroke="#a6a6a6" stroke-width="1" />
<text x="129.2" y="422.7" font-family="Liberation Sans" font-size="11.3" fill="#1e1e1e" stroke="#1e1e1e" stroke-width="0.2" textLength="38.7" lengthAdjust="spacingAndGlyphs" >Rename</text>
<text x="129.2" y="442.9" font-family="Liberation Sans" font-size="11.3" fill="#1e1e1e" stroke="#1e1e1e" stroke-width="0.2" textLength="29.6" lengthAdjust="spacingAndGlyphs" >Delete</text>
<line x1="126" y1="452.5" x2="324" y2="452.5" stroke="#a6a6a6" stroke-width="1" />
<text x="129.2" y="468.0" font-family="Liberation Sans" font-size="11.3" fill="#1e1e1e" stroke="#1e1e1e" stroke-width="0.2" textLength="34.8" lengthAdjust="spacingAndGlyphs" >Refresh</text>
<text x="129.2" y="488.8" font-family="Liberation Sans" font-size="11.3" fill="#1e1e1e" stroke="#1e1e1e" stroke-width="0.2" textLength="47.8" lengthAdjust="spacingAndGlyphs" >Properties</text>
<rect x="87.35" y="234.54999999999998" width="237.8" height="28.700000000000035" fill="none" stroke="#ec1c24" stroke-width="4.7"/>
<rect x="328" y="243" width="320" height="568" fill="rgba(0,0,0,0.05)" />
<rect x="327" y="242" width="320" height="568" fill="rgba(0,0,0,0.08)" />
<rect x="326" y="241" width="320" height="568" fill="rgba(0,0,0,0.10)" />
<rect x="325" y="240" width="320" height="568" fill="#eceffb" />
<rect x="326" y="241" width="22" height="566" fill="#cdd5e4" />
<rect x="325.5" y="240.5" width="319" height="567" fill="none" stroke="#5f6778" stroke-width="1"/>
<text x="358.3" y="255.89999999999998" font-family="Liberation Sans" font-size="11.3" fill="#1e1e1e" stroke="#1e1e1e" stroke-width="0.2" textLength="42.2" lengthAdjust="spacingAndGlyphs" >Detach...</text>
<line x1="355" y1="264.5" x2="643" y2="264.5" stroke="#9ea4b4" stroke-width="1" />
<text x="358.3" y="281.0" font-family="Liberation Sans" font-size="11.3" fill="#1e1e1e" stroke="#1e1e1e" stroke-width="0.2" textLength="56.5" lengthAdjust="spacingAndGlyphs" >Take Offline</text>
<text x="358.3" y="301.7" font-family="Liberation Sans" font-size="11.3" fill="#8d8d8d" stroke="#8d8d8d" stroke-width="0.2" textLength="60.5" lengthAdjust="spacingAndGlyphs" >Bring Online</text>
<line x1="355" y1="310.5" x2="643" y2="310.5" stroke="#9ea4b4" stroke-width="1" />
<text x="358.3" y="326.8" font-family="Liberation Sans" font-size="11.3" fill="#1e1e1e" stroke="#1e1e1e" stroke-width="0.2" textLength="91.6" lengthAdjust="spacingAndGlyphs" >Encrypt Columns...</text>
<line x1="355" y1="336.5" x2="643" y2="336.5" stroke="#9ea4b4" stroke-width="1" />
<text x="358.3" y="353.7" font-family="Liberation Sans" font-size="11.3" fill="#1e1e1e" stroke="#1e1e1e" stroke-width="0.2" textLength="159.3" lengthAdjust="spacingAndGlyphs" >Data Discovery and Classification</text>
<path d="M629.7 346.0 L634.1 349.5 L629.7 353.0 Z" fill="#111111" stroke="none" stroke-width="1" />
<line x1="355" y1="362.5" x2="643" y2="362.5" stroke="#9ea4b4" stroke-width="1" />
<text x="358.3" y="378.59999999999997" font-family="Liberation Sans" font-size="11.3" fill="#1e1e1e" stroke="#1e1e1e" stroke-width="0.2" textLength="30.2" lengthAdjust="spacingAndGlyphs" >Shrink</text>
<path d="M629.7 370.9 L634.1 374.4 L629.7 377.9 Z" fill="#111111" stroke="none" stroke-width="1" />
<line x1="355" y1="387.5" x2="643" y2="387.5" stroke="#9ea4b4" stroke-width="1" />
<text x="358.3" y="403.7" font-family="Liberation Sans" font-size="11.3" fill="#1e1e1e" stroke="#1e1e1e" stroke-width="0.2" textLength="47.4" lengthAdjust="spacingAndGlyphs" >Back Up...</text>
<rect x="326.8" y="410.7" width="316.5" height="19.4" fill="#fcf2c0" stroke="#7d8088" stroke-width="1"/>
<text x="358.3" y="424.5" font-family="Liberation Sans" font-size="11.3" fill="#1e1e1e" stroke="#1e1e1e" stroke-width="0.2" textLength="35.8" lengthAdjust="spacingAndGlyphs" >Restore</text>
<path d="M629.7 416.8 L634.1 420.3 L629.7 423.8 Z" fill="#111111" stroke="none" stroke-width="1" />
<line x1="355" y1="433.5" x2="643" y2="433.5" stroke="#9ea4b4" stroke-width="1" />
<text x="358.3" y="450.9" font-family="Liberation Sans" font-size="11.3" fill="#1e1e1e" stroke="#1e1e1e" stroke-width="0.2" textLength="38.2" lengthAdjust="spacingAndGlyphs" >Mirror...</text>
<text x="358.3" y="470.8" font-family="Liberation Sans" font-size="11.3" fill="#1e1e1e" stroke="#1e1e1e" stroke-width="0.2" textLength="181.3" lengthAdjust="spacingAndGlyphs" >Launch Database Mirroring Monitor...</text>
<text x="358.3" y="490.8" font-family="Liberation Sans" font-size="11.3" fill="#1e1e1e" stroke="#1e1e1e" stroke-width="0.2" textLength="112.7" lengthAdjust="spacingAndGlyphs" >Ship Transaction Logs...</text>
<line x1="355" y1="499.5" x2="643" y2="499.5" stroke="#9ea4b4" stroke-width="1" />
<text x="358.3" y="516.7" font-family="Liberation Sans" font-size="11.3" fill="#1e1e1e" stroke="#1e1e1e" stroke-width="0.2" textLength="86.4" lengthAdjust="spacingAndGlyphs" >Generate Scripts...</text>
<text x="358.3" y="536.6" font-family="Liberation Sans" font-size="11.3" fill="#1e1e1e" stroke="#1e1e1e" stroke-width="0.2" textLength="229.9" lengthAdjust="spacingAndGlyphs" >Generate In-Memory OLTP Migration Checklists</text>
<line x1="355" y1="546.5" x2="643" y2="546.5" stroke="#9ea4b4" stroke-width="1" />
<text x="358.3" y="562.5" font-family="Liberation Sans" font-size="11.3" fill="#1e1e1e" stroke="#1e1e1e" stroke-width="0.2" textLength="145.0" lengthAdjust="spacingAndGlyphs" >Extract Data-tier Application...</text>
<text x="358.3" y="582.4000000000001" font-family="Liberation Sans" font-size="11.3" fill="#1e1e1e" stroke="#1e1e1e" stroke-width="0.2" textLength="250.3" lengthAdjust="spacingAndGlyphs" >Deploy Database to Microsoft Azure SQL Database...</text>
<text x="358.3" y="602.4000000000001" font-family="Liberation Sans" font-size="11.3" fill="#1e1e1e" stroke="#1e1e1e" stroke-width="0.2" textLength="143.0" lengthAdjust="spacingAndGlyphs" >Export Data-tier Application...</text>
<text x="358.3" y="622.9000000000001" font-family="Liberation Sans" font-size="11.3" fill="#1e1e1e" stroke="#1e1e1e" stroke-width="0.2" textLength="163.0" lengthAdjust="spacingAndGlyphs" >Register as Data-tier Application...</text>
<text x="358.3" y="642.9000000000001" font-family="Liberation Sans" font-size="11.3" fill="#1e1e1e" stroke="#1e1e1e" stroke-width="0.2" textLength="153.0" lengthAdjust="spacingAndGlyphs" >Upgrade Data-tier Application...</text>
<text x="358.3" y="663.2" font-family="Liberation Sans" font-size="11.3" fill="#8d8d8d" stroke="#8d8d8d" stroke-width="0.2" textLength="142.2" lengthAdjust="spacingAndGlyphs" >Delete Data-tier Application...</text>
<line x1="355" y1="672.5" x2="643" y2="672.5" stroke="#9ea4b4" stroke-width="1" />
<text x="358.3" y="688.7" font-family="Liberation Sans" font-size="11.3" fill="#1e1e1e" stroke="#1e1e1e" stroke-width="0.2" textLength="80.5" lengthAdjust="spacingAndGlyphs" >Import Flat File...</text>
<text x="358.3" y="709.0" font-family="Liberation Sans" font-size="11.3" fill="#1e1e1e" stroke="#1e1e1e" stroke-width="0.2" textLength="66.1" lengthAdjust="spacingAndGlyphs" >Import Data...</text>
<text x="358.3" y="728.9000000000001" font-family="Liberation Sans" font-size="11.3" fill="#1e1e1e" stroke="#1e1e1e" stroke-width="0.2" textLength="64.1" lengthAdjust="spacingAndGlyphs" >Export Data...</text>
<text x="358.3" y="748.9000000000001" font-family="Liberation Sans" font-size="11.3" fill="#1e1e1e" stroke="#1e1e1e" stroke-width="0.2" textLength="80.5" lengthAdjust="spacingAndGlyphs" >Copy Database...</text>
<line x1="355" y1="758.5" x2="643" y2="758.5" stroke="#9ea4b4" stroke-width="1" />
<text x="358.3" y="774.8000000000001" font-family="Liberation Sans" font-size="11.3" fill="#1e1e1e" stroke="#1e1e1e" stroke-width="0.2" textLength="149.0" lengthAdjust="spacingAndGlyphs" >Manage Database Encryption...</text>
<line x1="355" y1="784.5" x2="643" y2="784.5" stroke="#9ea4b4" stroke-width="1" />
<text x="358.3" y="800.7" font-family="Liberation Sans" font-size="11.3" fill="#1e1e1e" stroke="#1e1e1e" stroke-width="0.2" textLength="88.0" lengthAdjust="spacingAndGlyphs" >Database Upgrade</text>
<path d="M629.7 793.0 L634.1 796.5 L629.7 800.0 Z" fill="#111111" stroke="none" stroke-width="1" />
<rect x="647" y="413" width="172" height="84" fill="rgba(0,0,0,0.05)" />
<rect x="646" y="412" width="172" height="84" fill="rgba(0,0,0,0.08)" />
<rect x="645" y="411" width="172" height="84" fill="rgba(0,0,0,0.10)" />
<rect x="644" y="410" width="172" height="84" fill="#eceffb" />
<rect x="645" y="411" width="22" height="82" fill="#cdd5e4" />
<rect x="644.5" y="410.5" width="171" height="83" fill="none" stroke="#5f6778" stroke-width="1"/>
<text x="676.7" y="426.9" font-family="Liberation Sans" font-size="11.3" fill="#1e1e1e" stroke="#1e1e1e" stroke-width="0.2" textLength="52.3" lengthAdjust="spacingAndGlyphs" >Database...</text>
<text x="676.7" y="446.9" font-family="Liberation Sans" font-size="11.3" fill="#1e1e1e" stroke="#1e1e1e" stroke-width="0.2" textLength="103.5" lengthAdjust="spacingAndGlyphs" >Files and Filegroups...</text>
<text x="676.7" y="466.9" font-family="Liberation Sans" font-size="11.3" fill="#8d8d8d" stroke="#8d8d8d" stroke-width="0.2" textLength="84.3" lengthAdjust="spacingAndGlyphs" >Transaction Log...</text>
<text x="676.7" y="487.09999999999997" font-family="Liberation Sans" font-size="11.3" fill="#1e1e1e" stroke="#1e1e1e" stroke-width="0.2" textLength="31.9" lengthAdjust="spacingAndGlyphs" >Page...</text>
<rect x="325.35" y="407.45000000000005" width="320.09999999999997" height="24.699999999999978" fill="none" stroke="#ec1c24" stroke-width="4.7"/>
<rect x="655.5500000000001" y="403.55" width="161.49999999999994" height="29.600000000000012" fill="none" stroke="#ec1c24" stroke-width="4.7"/>
</svg>
</body></html>
